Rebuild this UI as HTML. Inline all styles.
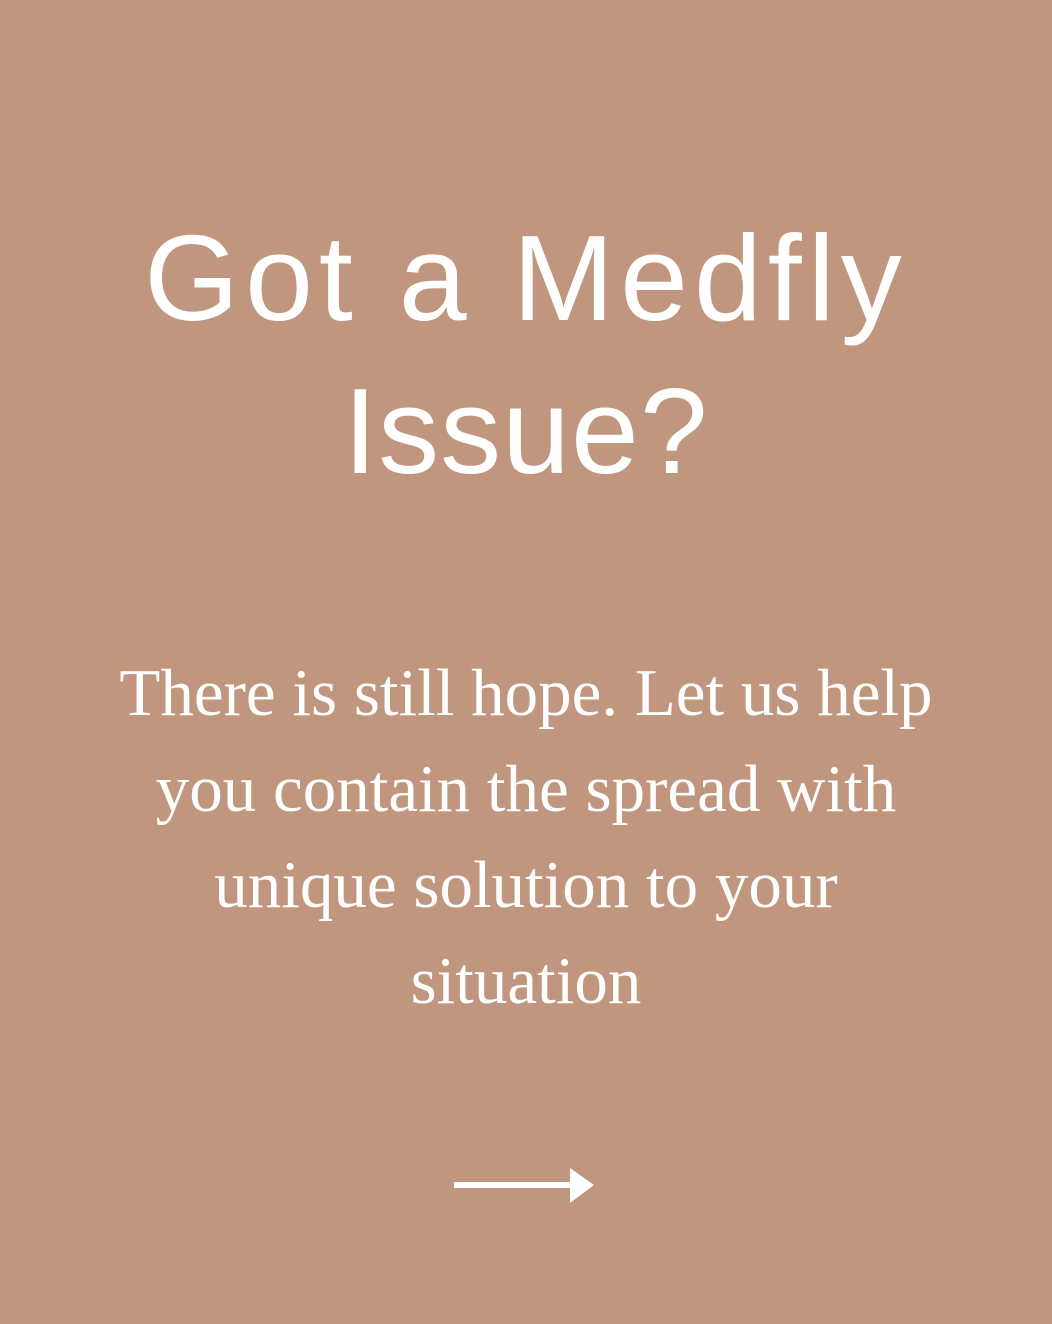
<!DOCTYPE html>
<html><head><meta charset="utf-8"><style>
html,body{margin:0;padding:0}
body{width:1052px;height:1324px;background:#c0967e;position:relative;overflow:hidden;color:#fff}
.t{position:absolute;left:0;width:1052px;text-align:center;font-family:"Liberation Sans",sans-serif;font-size:122px;letter-spacing:6px;line-height:153px;top:202px;font-weight:normal}
.t span{letter-spacing:1px}
.b{position:absolute;left:0;width:1052px;text-align:center;font-family:"Liberation Serif",serif;font-size:67px;line-height:96px;top:645px}
svg{position:absolute;left:450px;top:1163px}
</style></head><body>
<div class="t">Got a Medfly<br><span>Issue?</span></div>
<div class="b">There is still hope. Let us help<br>you contain the spread with<br>unique solution to your<br>situation</div>
<svg width="150" height="44" viewBox="0 0 150 44"><line x1="4" y1="22" x2="125" y2="22" stroke="#fff" stroke-width="6"/><polygon points="120,5 144,22 120,40" fill="#fff"/></svg>
</body></html>
